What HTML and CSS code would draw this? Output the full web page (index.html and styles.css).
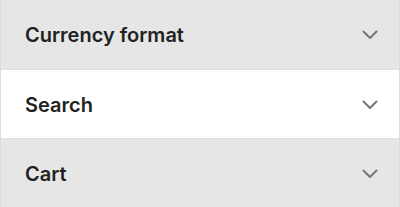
FILE: index.html
```html
<!DOCTYPE html>
<html>
<head>
<meta charset="utf-8">
<link rel="stylesheet" href="styles.css">
</head>
<body>
<div class="list">
  <div class="row">
    <span class="label">Currency format</span>
    <svg class="chev" width="16" height="10" viewBox="0 0 16 10"><path d="M1.5 1.5 L8 8 L14.5 1.5" fill="none" stroke="#767676" stroke-width="2" stroke-linecap="round" stroke-linejoin="round"/></svg>
  </div>
  <div class="row active">
    <span class="label">Search</span>
    <svg class="chev" width="16" height="10" viewBox="0 0 16 10"><path d="M1.5 1.5 L8 8 L14.5 1.5" fill="none" stroke="#767676" stroke-width="2" stroke-linecap="round" stroke-linejoin="round"/></svg>
  </div>
  <div class="row">
    <span class="label">Cart</span>
    <svg class="chev" width="16" height="10" viewBox="0 0 16 10"><path d="M1.5 1.5 L8 8 L14.5 1.5" fill="none" stroke="#767676" stroke-width="2" stroke-linecap="round" stroke-linejoin="round"/></svg>
  </div>
</div>
</body>
</html>
```

FILE: styles.css
```css
html, body {
  margin: 0;
  padding: 0;
  background: #e6e6e6;
}
.list {
  display: flex;
  flex-direction: column;
  width: 400px;
}
.row {
  height: 69px;
  box-sizing: border-box;
  display: flex;
  align-items: center;
  justify-content: space-between;
  padding: 1px 21px 0 24px;
  background: #e6e6e6;
  border-left: 1px solid #dcdcdc;
  border-right: 1px solid #dcdcdc;
}
.row.active {
  height: 70px;
  background: #ffffff;
  border-top: 1px solid #dedede;
  border-bottom: 1px solid #dedede;
  padding-top: 1px;
}
.label {
  font-family: Inter, "Noto Sans", sans-serif;
  font-weight: 600;
  font-size: 20px;
  color: #222222;
  letter-spacing: 0;
}
.chev {
  display: block;
}
```
